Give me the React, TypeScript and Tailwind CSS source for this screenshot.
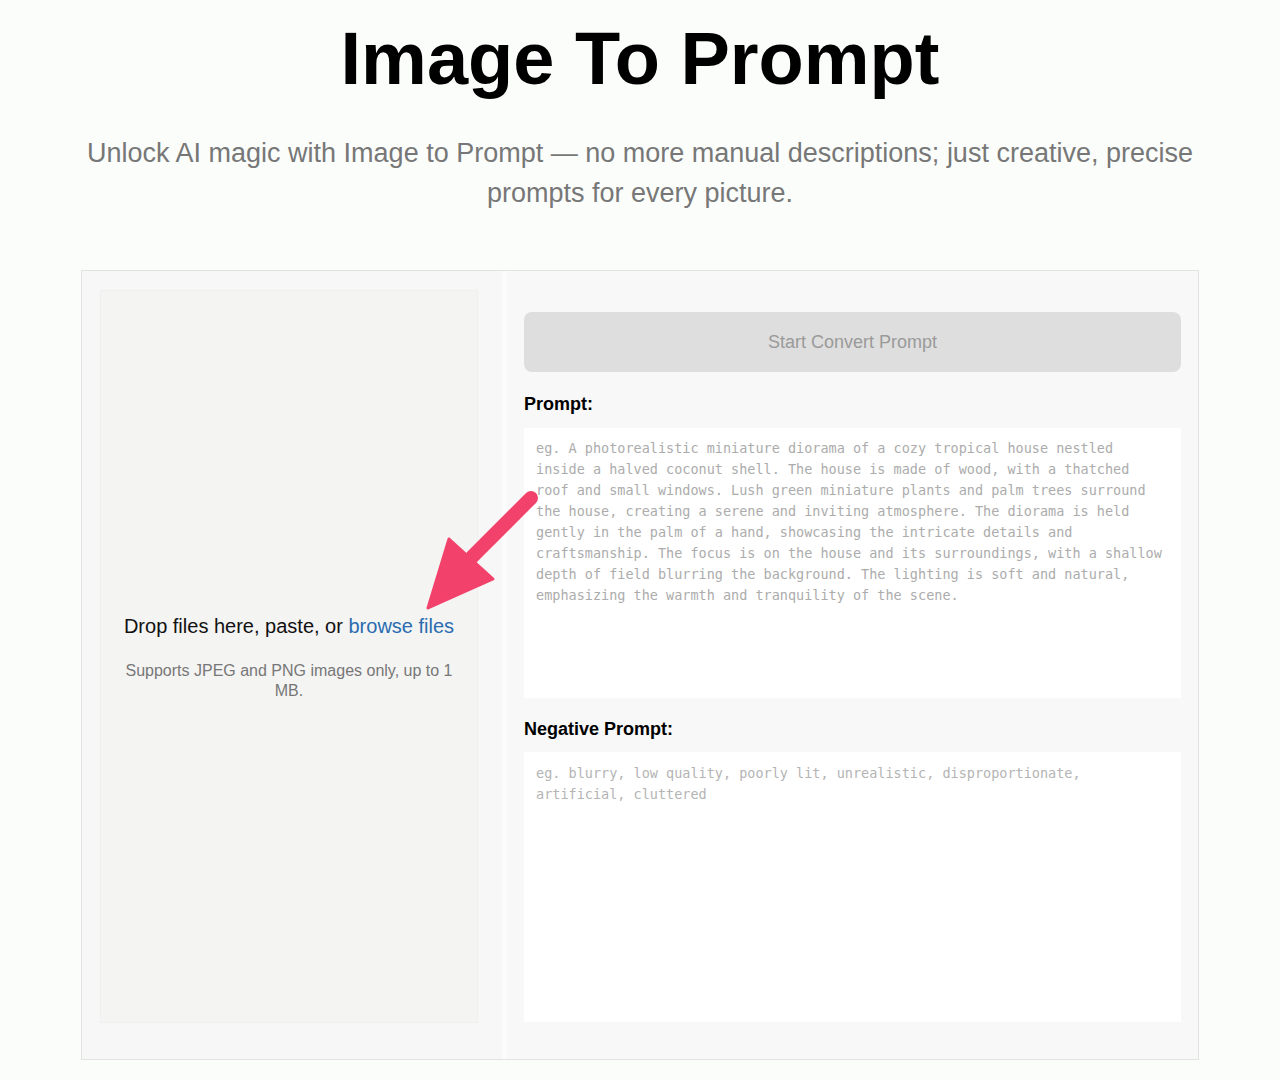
export default function App() {
  const sans = { fontFamily: '"Liberation Sans", Arial, sans-serif' };
  const mono = { fontFamily: '"DejaVu Sans Mono", "Liberation Mono", monospace' };

  return (
    <div className="min-h-[1080px] bg-[#fbfdfb] pt-[22px] text-black" style={sans}>
      <h1 className="text-center text-[74px] font-bold leading-none">Image To Prompt</h1>
      <p className="mx-auto mt-[37px] w-[1118px] text-center text-[27px] leading-[40px] text-[#777]">
        Unlock AI magic with Image to Prompt — no more manual descriptions; just creative, precise prompts for every
        picture.
      </p>

      <div className="relative mx-auto mt-[57px] flex w-[1118px] border border-[#e2e2e2] bg-[#f7f7f7]">
        {/* upload side */}
        <div className="flex w-[420px] flex-col pb-[36px] pl-[18px] pr-[24px] pt-[19px]">
          <div className="flex flex-1 flex-col items-center justify-center border border-[#efefef] bg-[#f4f4f3] px-[10px] text-center">
            <p className="whitespace-nowrap text-[20px] leading-[28px] text-[#111]">
              Drop files here, paste, or <span className="text-[#2b6cb0]">browse files</span>
            </p>
            <p className="mt-[21px] w-[330px] text-[16px] leading-[20px] text-[#777]">
              Supports JPEG and PNG images only, up to 1 MB.
            </p>
          </div>
        </div>
        <div className="w-[5px] bg-[#fcfcfc]" />

        {/* prompt side */}
        <div className="flex-1 bg-[#f8f8f8] pb-[37px] pl-[17px] pr-[17px] pt-[41px]">
          <button
            type="button"
            className="h-[60px] w-full rounded-lg bg-[#dedede] text-[18px] text-[#9a9a9a]"
            style={sans}
          >
            Start Convert Prompt
          </button>

          <label className="mt-[20px] mb-[12px] block text-[18px] font-bold leading-[24px]">Prompt:</label>
          <textarea
            className="block h-[270px] w-full resize-none bg-white px-[12px] pt-[10px] text-[13.5px] leading-[21px] outline-none placeholder:text-[#acacac]"
            style={mono}
            placeholder="eg. A photorealistic miniature diorama of a cozy tropical house nestled inside a halved coconut shell. The house is made of wood, with a thatched roof and small windows. Lush green miniature plants and palm trees surround the house, creating a serene and inviting atmosphere. The diorama is held gently in the palm of a hand, showcasing the intricate details and craftsmanship. The focus is on the house and its surroundings, with a shallow depth of field blurring the background. The lighting is soft and natural, emphasizing the warmth and tranquility of the scene."
          />

          <label className="mt-[19px] mb-[11px] block text-[18px] font-bold leading-[24px]">Negative Prompt:</label>
          <textarea
            className="block h-[270px] w-full resize-none bg-white px-[12px] pt-[11px] text-[13.5px] leading-[21px] outline-none placeholder:text-[#b4b4b4]"
            style={mono}
            placeholder="eg. blurry, low quality, poorly lit, unrealistic, disproportionate, artificial, cluttered"
          />
        </div>

        {/* pointer arrow */}
        <svg
          className="pointer-events-none absolute left-[338px] top-[214px]"
          width="120"
          height="128"
          viewBox="0 0 120 128"
        >
          <line x1="111" y1="13" x2="52" y2="72" stroke="#f2416b" strokeWidth="14" strokeLinecap="round" />
          <polygon points="8,123 29,54 73,94" fill="#f2416b" stroke="#f2416b" strokeWidth="3" strokeLinejoin="round" />
        </svg>
      </div>
    </div>
  );
}
